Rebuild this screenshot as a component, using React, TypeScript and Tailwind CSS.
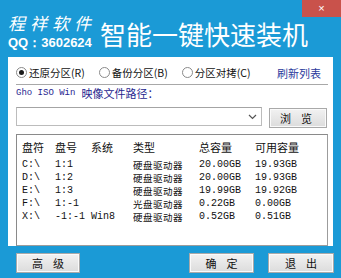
import * as React from 'react';

interface DiskRow {
  letter: string;
  num: string;
  sys: string;
  type: string;
  total: string;
  free: string;
}

const rows: DiskRow[] = [
  { letter: 'C:\\', num: '1:1', sys: '', type: '硬盘驱动器', total: '20.00GB', free: '19.93GB' },
  { letter: 'D:\\', num: '1:2', sys: '', type: '硬盘驱动器', total: '20.00GB', free: '19.93GB' },
  { letter: 'E:\\', num: '1:3', sys: '', type: '硬盘驱动器', total: '19.99GB', free: '19.92GB' },
  { letter: 'F:\\', num: '1:-1', sys: '', type: '光盘驱动器', total: '0.22GB', free: '0.00GB' },
  { letter: 'X:\\', num: '-1:-1', sys: 'Win8', type: '硬盘驱动器', total: '0.52GB', free: '0.51GB' },
];

const cjk = 'font-["Noto_Sans_CJK_SC",sans-serif]';
const mono = 'font-["Liberation_Mono","Noto_Sans_CJK_SC",monospace]';
const cols = 'grid grid-cols-[33px_36px_42px_66px_56px_1fr] items-center';

function Radio({ label, checked }: { label: string; checked?: boolean }) {
  return (
    <div className="flex items-center gap-[2px] whitespace-nowrap">
      <span className="w-[11px] h-[11px] rounded-full border border-[#8a8a8a] bg-white flex items-center justify-center">
        {checked && <span className="w-[5px] h-[5px] rounded-full bg-[#1a1a1a]" />}
      </span>
      <span className={`${cjk} text-[10.5px] leading-[12px] text-[#111]`}>{label}</span>
    </div>
  );
}

function WinButton({ label, className }: { label: string; className?: string }) {
  return (
    <button
      className={`h-[20px] border border-[#a9a9a9] bg-gradient-to-b from-[#f2f2f2] to-[#dcdcdc] shadow-[inset_0_0_0_1px_#fafafa] ${cjk} text-[11px] leading-none text-[#111] tracking-[10px] whitespace-nowrap ${className ?? ''}`}
    >
      {label}
    </button>
  );
}

export default function App() {
  return (
    <div className="relative w-[341px] h-[278px] bg-[#1b9ad6] overflow-hidden select-none">
      <div className="absolute top-0 right-0 w-[39px] h-[17px] bg-[#c9524b] flex items-center justify-center text-white text-[11px] leading-none font-['Liberation_Sans',sans-serif]">
        ×
      </div>

      <div className="h-[57px] flex pl-[8px] whitespace-nowrap">
        <div className="flex flex-col pt-[14px] w-[92px] shrink-0">
          <span className={`${cjk} text-[17px] leading-[18px] tracking-[5px] text-white italic`}>程祥软件</span>
          <span className="font-['Liberation_Sans',sans-serif] font-bold text-[13px] leading-[14px] text-white mt-[4px]">
            QQ：3602624
          </span>
        </div>
        <div className={`${cjk} pt-[18px] text-[26px] leading-[32px] text-white`}>智能一键快速装机</div>
      </div>

      <div className="mx-[8px] h-[189px] bg-white flex flex-col pl-[8px] pr-[5px]">
        <div className="h-[28px] pt-[4px] flex items-center border-b border-[#a8a8a8]">
          <Radio label="还原分区(R)" checked />
          <div className="w-[14px]" />
          <Radio label="备份分区(B)" />
          <div className="w-[14px]" />
          <Radio label="分区对拷(C)" />
          <span className={`ml-auto mr-[7px] ${cjk} text-[11px] leading-[12px] text-[#2c3a9c]`}>刷新列表</span>
        </div>

        <div className="h-[16px] flex items-center text-[#26268f] whitespace-nowrap">
          <span className={`${mono} text-[9px] leading-none`}>Gho ISO Win</span>
          <span className={`${cjk} text-[11px] leading-[12px] ml-[6px]`}>映像文件路径：</span>
        </div>

        <div className="mt-[6px] flex items-start">
          <div className="w-[246px] h-[19px] border border-[#bcbcbc] border-t-[#a4a4a4] bg-white flex items-center justify-end pr-[4px]">
            <svg width="9" height="6" viewBox="0 0 9 6">
              <path d="M1 1l3.5 3.5L8 1" fill="none" stroke="#555" strokeWidth="1.2" />
            </svg>
          </div>
          <WinButton label="浏览" className="ml-[7px] mt-[1px] w-[58px] h-[18px] tracking-[6px] pl-[6px]" />
        </div>

        <div className="mt-[6px] w-[312px] h-[112px] border border-[#9c9c9c] border-t-[#8a8a8a] border-l-[#8a8a8a] bg-white pl-[5px]">
          <div className={`${cols} h-[23px] ${cjk} text-[11px] leading-[12px] text-[#111]`}>
            <span>盘符</span>
            <span>盘号</span>
            <span>系统</span>
            <span>类型</span>
            <span>总容量</span>
            <span>可用容量</span>
          </div>
          {rows.map((r) => (
            <div key={r.letter} className={`${cols} h-[13px] text-[10px] leading-[12px] text-[#111]`}>
              <span className={mono}>{r.letter}</span>
              <span className={mono}>{r.num}</span>
              <span className={mono}>{r.sys}</span>
              <span className={`${cjk} block h-[12px] overflow-hidden text-[9.5px] leading-[12px] tracking-[0.5px]`}>{r.type}</span>
              <span className={mono}>{r.total}</span>
              <span className={mono}>{r.free}</span>
            </div>
          ))}
        </div>
      </div>

      <div className="flex items-start pt-[7px]">
        <WinButton label="高级" className="ml-[16px] w-[64px] pl-[10px]" />
        <WinButton label="确定" className="ml-[109px] w-[65px] pl-[10px]" />
        <WinButton label="退出" className="ml-[14px] w-[66px] pl-[10px]" />
      </div>
    </div>
  );
}
